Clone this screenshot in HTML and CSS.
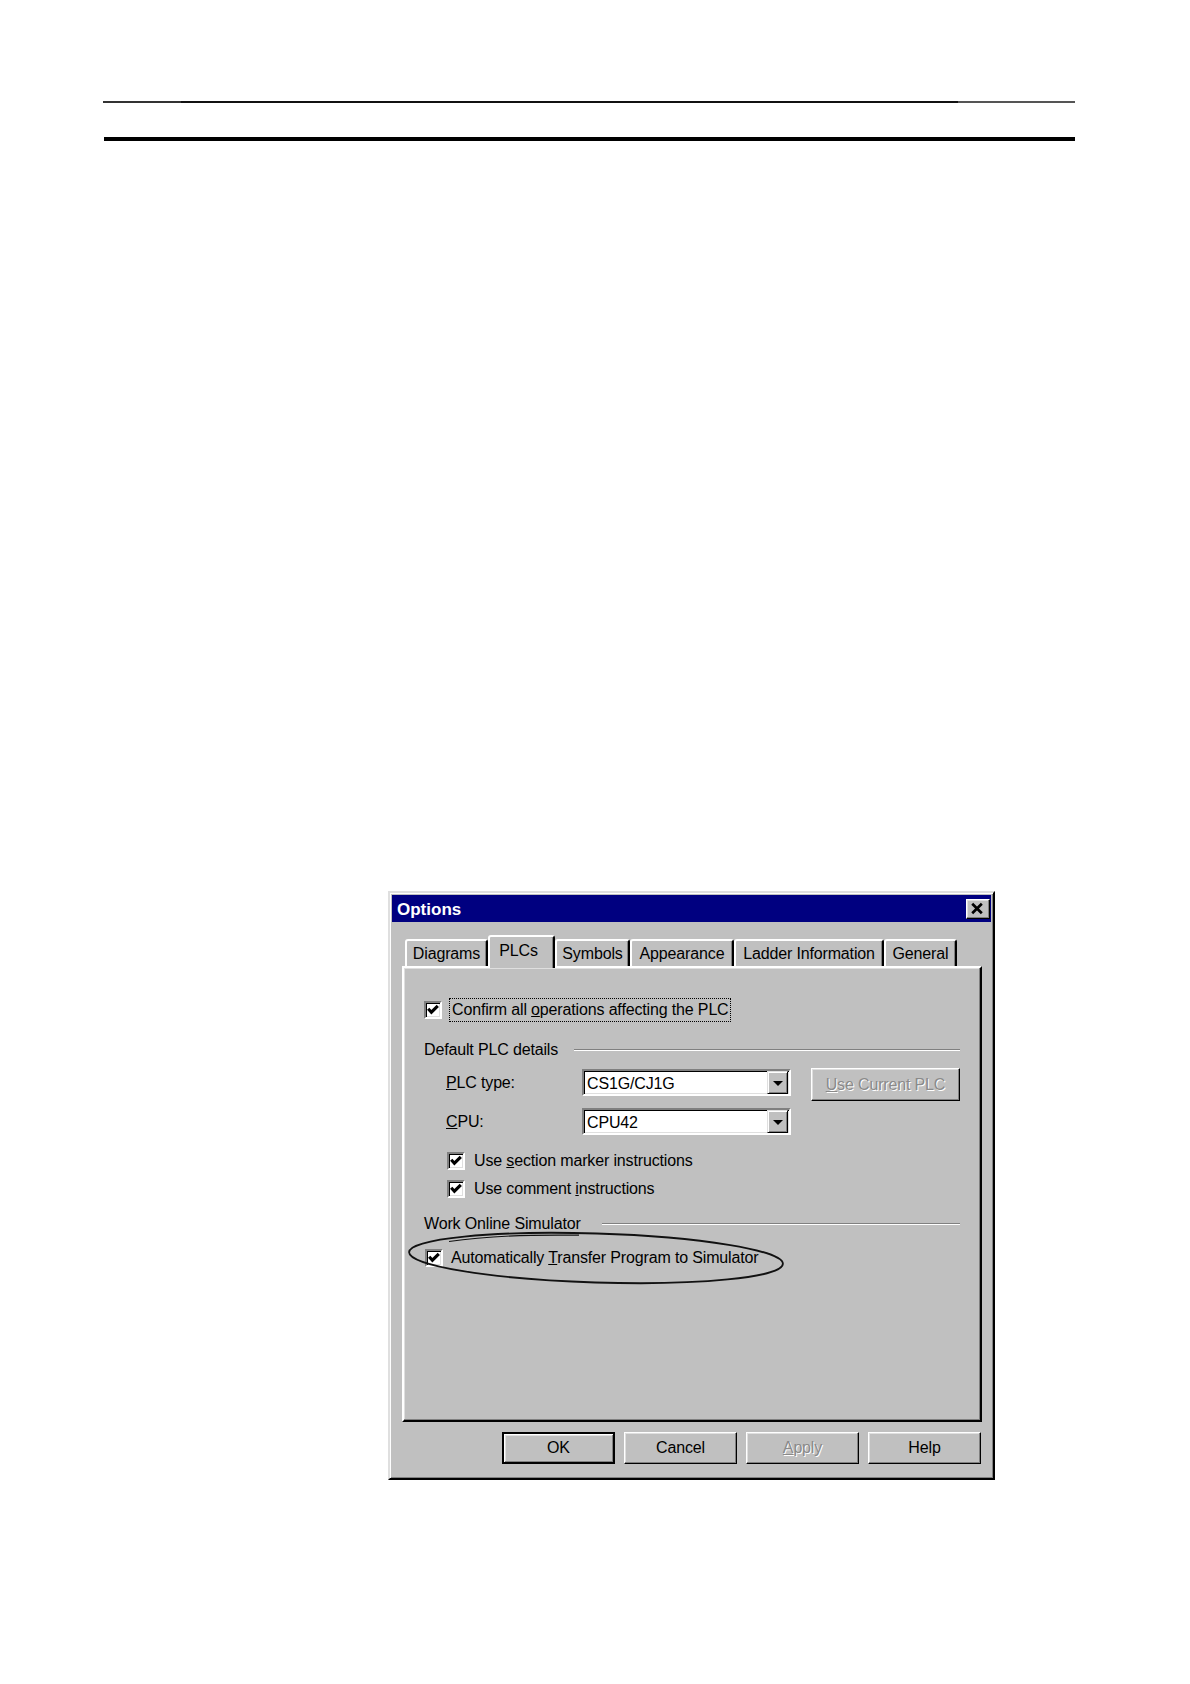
FILE: index.html
```html
<!DOCTYPE html>
<html>
<head>
<meta charset="utf-8">
<title>Options</title>
<link rel="stylesheet" href="styles.css">
</head>
<body>
<div class="page">
  <div class="rule-thin"></div>
  <div class="rule-thick"></div>

  <div class="dialog">
    <div class="titlebar">
      <span class="title">Options</span>
      <span class="close">
        <svg width="24" height="20" viewBox="0 0 24 20"><path d="M6.5 4.5 L16.5 14.5 M16.5 4.5 L6.5 14.5" stroke="#000" stroke-width="2.8" fill="none"/></svg>
      </span>
    </div>
    <div class="dlg-body">
      <div class="tabs">
        <div class="tab w-diag">Diagrams</div>
        <div class="tab tab-sel w-plcs">PLCs</div>
        <div class="tab w-sym">Symbols</div>
        <div class="tab w-app">Appearance</div>
        <div class="tab w-lad">Ladder Information</div>
        <div class="tab w-gen">General</div>
      </div>
      <div class="panel">
        <div class="row-confirm">
          <span class="chk"><svg width="14" height="14" viewBox="0 0 14 14"><path d="M2.2 5.8 L5.4 9.2 L11.8 2.8" stroke="#000" stroke-width="3.1" fill="none"/></svg></span>
          <span class="focus">Confirm all <u>o</u>perations affecting the PLC</span>
        </div>

        <div class="group">
          <span class="group-label">Default PLC details</span>
          <span class="etch"></span>
        </div>

        <div class="field">
          <span class="flabel"><u>P</u>LC type:</span>
          <div class="combo">
            <span class="combo-text">CS1G/CJ1G</span>
            <span class="combo-btn"><span class="tri"></span></span>
          </div>
          <div class="btn btn-use disabled"><span><u>U</u>se Current PLC</span></div>
        </div>

        <div class="field field-cpu">
          <span class="flabel"><u>C</u>PU:</span>
          <div class="combo">
            <span class="combo-text">CPU42</span>
            <span class="combo-btn"><span class="tri"></span></span>
          </div>
        </div>

        <div class="chkrow chk-sec">
          <span class="chk"><svg width="14" height="14" viewBox="0 0 14 14"><path d="M2.2 5.8 L5.4 9.2 L11.8 2.8" stroke="#000" stroke-width="3.1" fill="none"/></svg></span>
          <span class="chk-text">Use <u>s</u>ection marker instructions</span>
        </div>
        <div class="chkrow chk-com">
          <span class="chk"><svg width="14" height="14" viewBox="0 0 14 14"><path d="M2.2 5.8 L5.4 9.2 L11.8 2.8" stroke="#000" stroke-width="3.1" fill="none"/></svg></span>
          <span class="chk-text">Use comment <u>i</u>nstructions</span>
        </div>

        <div class="group group-sim">
          <span class="group-label">Work Online Simulator</span>
          <span class="etch"></span>
        </div>

        <div class="chkrow chk-auto">
          <span class="chk"><svg width="14" height="14" viewBox="0 0 14 14"><path d="M2.2 5.8 L5.4 9.2 L11.8 2.8" stroke="#000" stroke-width="3.1" fill="none"/></svg></span>
          <span class="chk-text auto-text">Automatically <u>T</u>ransfer Program to Simulator</span>
        </div>

        <svg class="ellipse" width="400" height="330" viewBox="0 0 400 330">
          <ellipse cx="192" cy="290" rx="187" ry="24.5" transform="rotate(1.8 192 290)" fill="none" stroke="#111" stroke-width="1.8"/>
          <path d="M45 273.5 Q 95 266 175 267.2" fill="none" stroke="#111" stroke-width="1.2"/>
        </svg>
      </div>

      <div class="buttons">
        <div class="btn btn-default"><span>OK</span></div>
        <div class="btn"><span>Cancel</span></div>
        <div class="btn disabled"><span><u>A</u>pply</span></div>
        <div class="btn"><span>Help</span></div>
      </div>
    </div>
  </div>
</div>
</body>
</html>
```

FILE: styles.css
```css
html, body {
  margin: 0;
  padding: 0;
  background: #ffffff;
}

.page {
  width: 1190px;
  min-height: 1684px;
  padding-top: 101px;
  box-sizing: border-box;
  font-family: "Liberation Sans", Arial, sans-serif;
  font-size: 16px;
  letter-spacing: -0.15px;
  color: #000;
}

.rule-thin {
  margin-left: 103px;
  width: 972px;
  height: 2px;
  background: linear-gradient(to right, #333 0%, #333 8%, #111 8%, #111 88%, #555 88%, #555 100%);
}

.rule-thick {
  margin-left: 104px;
  width: 971px;
  height: 4px;
  margin-top: 34px;
  background: #000;
}

/* ---------- dialog ---------- */
.dialog {
  margin-top: 750px;
  margin-left: 388px;
  width: 607px;
  box-sizing: border-box;
  background: #c0c0c0;
  border: 2px solid;
  border-color: #dfdfdf #000 #000 #dfdfdf;
  box-shadow: inset 1px 1px #fff, inset -1px -1px #808080;
  padding: 2px;
}

.titlebar {
  height: 27px;
  background: #000080;
  display: flex;
  align-items: center;
  justify-content: space-between;
}

.title {
  color: #fff;
  font-weight: bold;
  font-size: 17px;
  letter-spacing: 0;
  padding-left: 5px;
  line-height: 27px;
  padding-top: 2px;
}

.close {
  width: 24px;
  height: 20px;
  margin-right: 1px;
  box-sizing: border-box;
  background: #c0c0c0;
  border: 1px solid;
  border-color: #fff #000 #000 #fff;
  box-shadow: inset -1px -1px #808080, inset 1px 1px #dfdfdf;
  display: flex;
}

.close svg {
  margin: -1px 0 0 -1px;
}

.dlg-body {
  padding: 13px 9px 12px 10px;
}

/* ---------- tabs ---------- */
.tabs {
  display: flex;
  align-items: flex-end;
  height: 33px;
  margin-bottom: -2px;
  padding-left: 3px;
  position: relative;
  z-index: 2;
}

.tab {
  height: 27px;
  margin-bottom: 2px;
  box-sizing: border-box;
  border: 2px solid;
  border-bottom: none;
  border-color: #fff #000 transparent #fff;
  border-radius: 3px 3px 0 0;
  box-shadow: inset -1px 0 #808080;
  display: flex;
  align-items: center;
  justify-content: center;
  line-height: 20px;
  padding-top: 1px;
  background: #c0c0c0;
  white-space: nowrap;
}

.tab-sel {
  height: 33px;
  margin-bottom: 0;
  align-items: flex-start;
  padding-top: 4px;
  padding-right: 6px;
  position: relative;
  z-index: 3;
}

.w-diag { width: 83px; }
.w-plcs { width: 67px; }
.w-sym  { width: 75px; }
.w-app  { width: 104px; }
.w-lad  { width: 150px; }
.w-gen  { width: 73px; }

/* ---------- panel ---------- */
.panel {
  position: relative;
  height: 456px;
  box-sizing: border-box;
  border: 2px solid;
  border-color: #fff #000 #000 #fff;
  box-shadow: inset -1px -1px #808080, inset 1px 1px #dfdfdf;
  padding: 30px 20px 0 20px;
}

.row-confirm {
  display: flex;
  align-items: center;
  height: 24px;
}

.chk {
  width: 18px;
  height: 18px;
  box-sizing: border-box;
  flex: none;
  background: #fff;
  border: 2px solid;
  border-color: #808080 #fff #fff #808080;
  box-shadow: inset 1px 1px #000, inset -1px -1px #dfdfdf;
  display: flex;
}

.focus {
  margin-left: 7px;
  border: 1px dotted #000;
  padding: 0 1px 0 2px;
  line-height: 22px;
  white-space: nowrap;
}

.group {
  display: flex;
  align-items: center;
  height: 20px;
  line-height: 20px;
  margin-top: 18px;
}

.group-label {
  white-space: nowrap;
}

.etch {
  flex: 1;
  margin-left: 16px;
  height: 0;
  border-top: 1px solid #808080;
  border-bottom: 1px solid #fff;
}

.group-sim {
  margin-top: 15px;
}

.group-sim .etch {
  margin-left: 21px;
}

.field {
  display: flex;
  align-items: flex-start;
  height: 27px;
  margin-top: 9px;
  padding-left: 22px;
}

.field-cpu {
  margin-top: 12px;
}

.flabel {
  width: 136px;
  flex: none;
  line-height: 20px;
  margin-top: 4px;
  white-space: nowrap;
}

.combo {
  width: 209px;
  height: 27px;
  box-sizing: border-box;
  flex: none;
  background: #fff;
  border: 2px solid;
  border-color: #808080 #fff #fff #808080;
  box-shadow: inset 1px 1px #000, inset -1px -1px #dfdfdf;
  display: flex;
  padding-right: 1px;
}

.combo-text {
  flex: 1;
  padding-left: 3px;
  line-height: 23px;
  padding-top: 1px;
}

.combo-btn {
  width: 21px;
  height: 23px;
  box-sizing: border-box;
  background: #c0c0c0;
  border: 1px solid;
  border-color: #dfdfdf #000 #000 #dfdfdf;
  box-shadow: inset 1px 1px #fff, inset -1px -1px #808080;
  display: flex;
  align-items: center;
  justify-content: center;
}

.tri {
  width: 0;
  height: 0;
  border-left: 5px solid transparent;
  border-right: 5px solid transparent;
  border-top: 5px solid #000;
  margin-top: 1px;
}

.btn {
  width: 113px;
  height: 32px;
  box-sizing: border-box;
  background: #c0c0c0;
  border: 1px solid;
  border-color: #fff #000 #000 #fff;
  box-shadow: inset -1px -1px #808080, inset 1px 1px #dfdfdf;
  display: flex;
  align-items: center;
  justify-content: center;
  white-space: nowrap;
}

.btn-use {
  width: 149px;
  height: 33px;
  margin-left: 20px;
  margin-top: -1px;
}

.btn-default {
  border: 2px solid #000;
  box-shadow: inset 1px 1px #fff, inset -1px -1px #808080, inset 2px 2px #dfdfdf;
}

.disabled {
  color: #8a8a8a;
  text-shadow: 1px 1px 0 #fff;
}

.chkrow {
  display: flex;
  align-items: center;
  height: 20px;
  line-height: 20px;
}

.chk-sec {
  margin-top: 16px;
  padding-left: 23px;
}

.chk-com {
  margin-top: 8px;
  padding-left: 23px;
}

.chk-auto {
  margin-top: 14px;
  padding-left: 1px;
}

.chk-text {
  margin-left: 9px;
  white-space: nowrap;
}

.auto-text {
  margin-left: 8px;
}

.ellipse {
  position: absolute;
  left: 0;
  top: 0;
  overflow: visible;
}

/* ---------- bottom buttons ---------- */
.buttons {
  display: flex;
  justify-content: flex-end;
  gap: 9px;
  margin-top: 10px;
  margin-right: 1px;
}
```
